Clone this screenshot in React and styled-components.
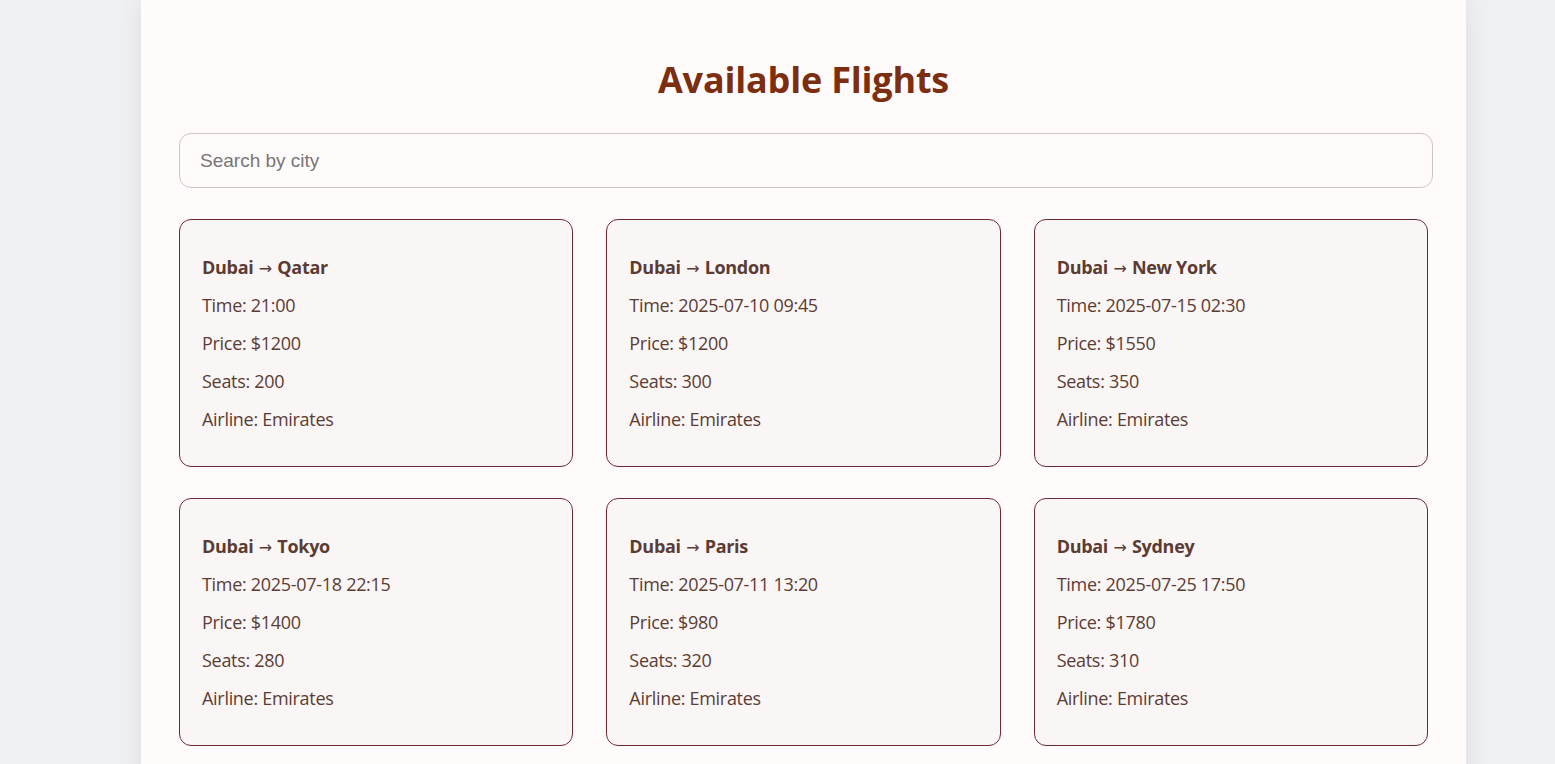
import React from 'react';
import styled, { createGlobalStyle } from 'styled-components';

const GlobalStyle = createGlobalStyle`
  body {
    margin: 0;
    background: #eef0f4;
    font-family: "Open Sans", "Noto Sans", sans-serif;
  }
`;

const Page = styled.div`
  width: 1325px;
  margin-left: 141px;
  padding: 58px 38px 40px;
  box-sizing: border-box;
  background: #fffbfa;
  box-shadow: 0 0 24px rgba(0, 0, 0, 0.08);
  min-height: 800px;
`;

const Title = styled.h2`
  margin: 0 0 31px;
  text-align: center;
  font-size: 36px;
  line-height: 44px;
  font-weight: 700;
  color: #7b2e10;
  letter-spacing: -0.2px;
`;

const SearchInput = styled.input`
  display: block;
  width: calc(100% + 5px);
  height: 55px;
  box-sizing: border-box;
  padding: 0 20px;
  border: 1px solid #cdc5c0;
  border-radius: 12px;
  background: #fffbfa;
  font-family: "Liberation Sans", Arial, sans-serif;
  font-size: 19px;
  color: #333;
  outline: none;
  &::placeholder { color: #767676; }
`;

const Grid = styled.div`
  display: grid;
  grid-template-columns: repeat(3, 1fr);
  column-gap: 33px;
  row-gap: 31px;
  margin-top: 31px;
`;

const Card = styled.div`
  border: 1px solid #6e2a33;
  border-radius: 12px;
  background: #faf6f5;
  padding: 19px 22px 19px;
  color: #5a3c34;
`;

const Line = styled.p`
  margin: 18px 0;
  font-size: 18px;
  line-height: 20px;
  height: 20px;
  font-weight: ${({ $bold }) => ($bold ? 700 : 400)};
  letter-spacing: -0.3px;
`;

const Arrow = styled.span`
  font-family: "DejaVu Sans", sans-serif;
  font-weight: 400;
  font-size: 16px;
  line-height: 1;
  margin: 0 1px;
`;

const flights = [
  { to: 'Qatar', time: '21:00', price: 1200, seats: 200 },
  { to: 'London', time: '2025-07-10 09:45', price: 1200, seats: 300 },
  { to: 'New York', time: '2025-07-15 02:30', price: 1550, seats: 350 },
  { to: 'Tokyo', time: '2025-07-18 22:15', price: 1400, seats: 280 },
  { to: 'Paris', time: '2025-07-11 13:20', price: 980, seats: 320 },
  { to: 'Sydney', time: '2025-07-25 17:50', price: 1780, seats: 310 },
];

export default function App() {
  return (
    <>
      <GlobalStyle />
      <Page>
        <Title>Available Flights</Title>
        <SearchInput placeholder="Search by city" />
        <Grid>
          {flights.map(f => (
            <Card key={f.to}>
              <Line $bold>Dubai <Arrow>→</Arrow> {f.to}</Line>
              <Line>Time: {f.time}</Line>
              <Line>Price: ${f.price}</Line>
              <Line>Seats: {f.seats}</Line>
              <Line>Airline: Emirates</Line>
            </Card>
          ))}
        </Grid>
      </Page>
    </>
  );
}
